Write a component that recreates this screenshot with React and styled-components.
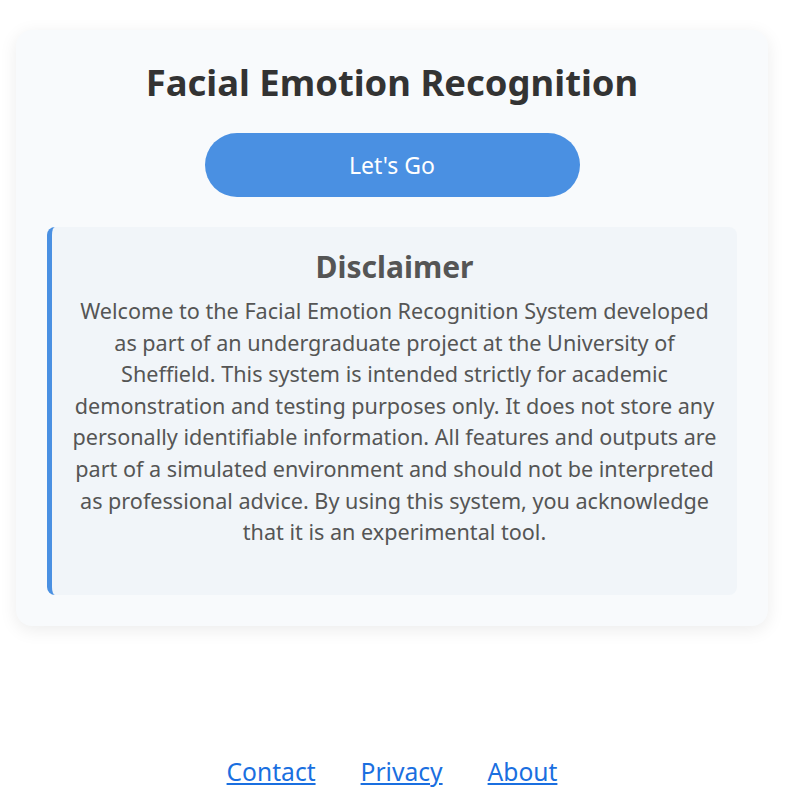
import styled, { createGlobalStyle } from "styled-components";

const GlobalStyle = createGlobalStyle`
  html, body {
    margin: 0;
    padding: 0;
    background: #ffffff;
    font-family: "Noto Sans", "Open Sans", sans-serif;
  }
`;

const Page = styled.div`
  width: 784px;
  min-height: 806px;
  display: flex;
  flex-direction: column;
  align-items: center;
`;

const Card = styled.div`
  width: 752px;
  box-sizing: border-box;
  margin-top: 30px;
  padding: 26px 31px 31px;
  background: #f8fafc;
  border-radius: 16px;
  box-shadow: 0 4px 18px rgba(0, 0, 0, 0.08);
  display: flex;
  flex-direction: column;
  align-items: center;
`;

const Title = styled.h1`
  margin: 0;
  font-size: 36.4px;
  line-height: 52px;
  font-weight: 700;
  color: #333333;
`;

const GoButton = styled.button`
  margin-top: 25px;
  width: 375px;
  height: 64px;
  border: none;
  border-radius: 32px;
  background: #4a90e2;
  color: #ffffff;
  font-family: inherit;
  font-size: 23px;
  cursor: pointer;
`;

const Disclaimer = styled.div`
  margin-top: 30px;
  width: 100%;
  box-sizing: border-box;
  padding: 18px 16px 47px;
  background: #f1f5f9;
  border-left: 5px solid #4a90e2;
  border-radius: 8px;
  text-align: center;
`;

const DisclaimerTitle = styled.h2`
  margin: 0;
  font-size: 30px;
  line-height: 44px;
  font-weight: 700;
  color: #555555;
`;

const DisclaimerText = styled.p`
  margin: 6px 0 0;
  font-size: 21.6px;
  line-height: 31.6px;
  color: #555555;
`;

const Footer = styled.footer`
  margin-top: auto;
  padding-bottom: 18px;
  display: flex;
  gap: 45px;
`;

const FooterLink = styled.a`
  font-size: 24.6px;
  color: #1a6fe0;
  text-decoration: underline;
`;

export default function App() {
  return (
    <>
      <GlobalStyle />
      <Page>
        <Card>
          <Title>Facial Emotion Recognition</Title>
          <GoButton>Let's Go</GoButton>
          <Disclaimer>
            <DisclaimerTitle>Disclaimer</DisclaimerTitle>
            <DisclaimerText>
              Welcome to the Facial Emotion Recognition System developed as part of an
              undergraduate project at the University of Sheffield. This system is intended
              strictly for academic demonstration and testing purposes only. It does not store
              any personally identifiable information. All features and outputs are part of a
              simulated environment and should not be interpreted as professional advice. By
              using this system, you acknowledge that it is an experimental tool.
            </DisclaimerText>
          </Disclaimer>
        </Card>
        <Footer>
          <FooterLink href="#">Contact</FooterLink>
          <FooterLink href="#">Privacy</FooterLink>
          <FooterLink href="#">About</FooterLink>
        </Footer>
      </Page>
    </>
  );
}
